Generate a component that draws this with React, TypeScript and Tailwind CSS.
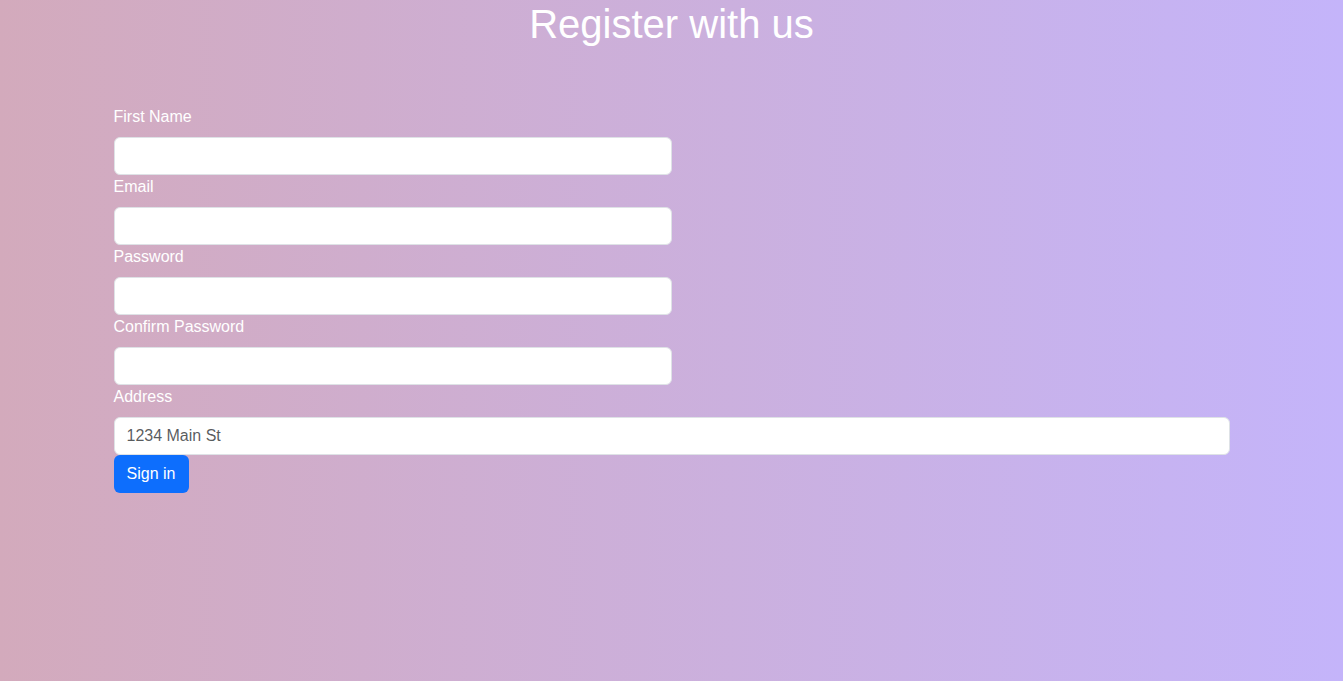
import React from "react";

const labelCls = "block text-white text-base leading-6 mb-2";
const inputCls =
  "block h-[38px] rounded-[6px] border border-[#dee2e6] bg-white px-3 py-[6px] text-base leading-6 text-[#212529] placeholder:text-[#212529bf] outline-none";

export default function App() {
  return (
    <div
      className="min-h-screen w-full bg-gradient-to-r from-[#d3aabc] to-[#c4b4fa]"
      style={{ fontFamily: '"Liberation Sans", Arial, sans-serif' }}
    >
      <h1 className="m-0 text-center text-[40px] leading-[48px] font-normal text-white">
        Register with us
      </h1>
      <form className="mx-auto mt-[57px] w-[1140px] px-3">
        <label className={labelCls}>First Name</label>
        <input type="text" className={`${inputCls} w-[558px]`} />
        <label className={labelCls}>Email</label>
        <input type="email" className={`${inputCls} w-[558px]`} />
        <label className={labelCls}>Password</label>
        <input type="password" className={`${inputCls} w-[558px]`} />
        <label className={labelCls}>Confirm Password</label>
        <input type="password" className={`${inputCls} w-[558px]`} />
        <label className={labelCls}>Address</label>
        <input type="text" placeholder="1234 Main St" className={`${inputCls} w-full`} />
        <button
          type="button"
          className="block h-[38px] w-[75px] rounded-[6px] bg-[#0d6efd] py-[6px] text-center text-base leading-6 text-white"
        >
          Sign in
        </button>
      </form>
    </div>
  );
}
